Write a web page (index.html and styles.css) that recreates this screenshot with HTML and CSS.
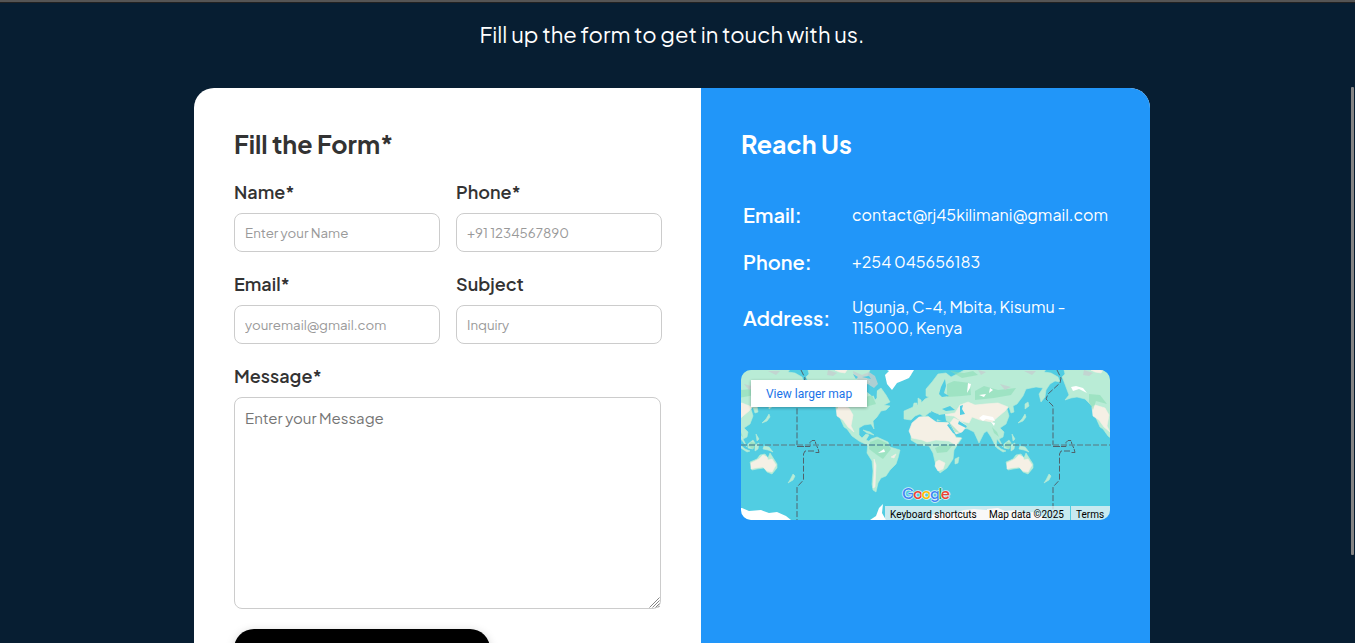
FILE: index.html
```html
<!DOCTYPE html>
<html lang="en">
<head>
<meta charset="utf-8">
<title>Contact</title>
<link rel="stylesheet" href="styles.css">
</head>
<body>
<div class="page">
  <p class="intro">Fill up the form to get in touch with us.</p>
  <main class="card">
    <form class="form">
      <h2 class="heading">Fill the Form*</h2>
      <div class="grid">
        <div class="field"><label for="name">Name*</label><input id="name" placeholder="Enter your Name"></div>
        <div class="field"><label for="phone">Phone*</label><input id="phone" placeholder="+91 1234567890"></div>
        <div class="field"><label for="email">Email*</label><input id="email" placeholder="youremail@gmail.com"></div>
        <div class="field"><label for="subject">Subject</label><input id="subject" placeholder="Inquiry"></div>
      </div>
      <div class="field message"><label for="message">Message*</label><textarea id="message" placeholder="Enter your Message"></textarea>
        <svg class="grip" width="11" height="11" viewBox="0 0 11 11" fill="none" stroke="#777" stroke-width=".9"><path d="M.5 10.5l10-10M3.5 10.5l7-7M6.5 10.5l4-4M9 10.5l1.5-1.5"/></svg></div>
      <button class="submit" type="button" aria-label="Submit"></button>
    </form>
    <section class="reach">
      <h2 class="heading">Reach Us</h2>
      <dl class="details">
        <dt>Email:</dt><dd>contact@rj45kilimani@gmail.com</dd>
        <dt>Phone:</dt><dd>+254 045656183</dd>
        <dt>Address:</dt><dd class="address">Ugunja, C-4, Mbita, Kisumu -<br>115000, Kenya</dd>
      </dl>
      <div class="map">
        <svg class="world" viewBox="0 0 369 150" width="369" height="150">
          <defs>
            <g id="world">
              <g fill="#b9ecd6" stroke="#b9ecd6" stroke-width=".6" stroke-linejoin="round">
                <path d="M10 9l-1-2 3-3-1-4h62l-4 8 4 4-4 4 1 6 6 3 2 5 2-2v-7l4-3 5 7 4 7-6 3 6 1-4 4-5 1-4 6-4 4 1 8-3-5-7 1-5 3v7l3 3 4-4 3 1-3 5 5 2 1 6-5-3-8-4-7-5-5-7-3-2-4-9-2-9-4-5-5-5-8-2-6 1-6 2 4-5z"/>
                <path d="M71 72l3-3 6-2 11 5 2 5 10 3-2 8-2 6-6 6-4 6-5 2-3 5-2 9-3-2-1-6 1-13-1-10-5-8z"/>
                <path d="M123 34l5-5 4-2-3-1v-7l6-7 6-8 8-1 5 4 8-4 9-5h79l-3 4 7 1 7 4 2 5-5-1-5 3-4 6-1 7-4 5-2-8 4-6-7-1-10 2-3 7-6 8-4 2 1 6-3 1-2-6-2 2 2 7-3 8-6 4 4 4-1 5-4 2 4 8-6-8-1 8-5-10-4-6-3 2-5 10-5-11-6-3-12-2-12-8-7 2 2-7-9-2-6 5-4-3-5 2-4 4-7-1v-8z"/>
                <path d="M121 28l3 2 1 7-5 1 1-4zm-4 5h3v4h-4zm6 14l8-1 4 4 5 3 11-1 8 15 6 1-8 12-1 9-6 9-7 5-4-7-3-13-4-7-10-1-8-5v-12z"/>
                <path d="M197 73l7 6 5 2-3 1-6-4zm10 1l5-4 2 3-2 6-5-1zm7 1l4-2-1 6-3 2zm9 1l5 1 4 5-5-2-5-1zM215 64l3 5-2 2zM225 49l3-5 1 3-3 4-5 2zm3-15l3-2 1 4-4 3z"/>
                <path d="M209 92l7-3 3-4 5-1 3 4 2-5 7 11v4l-5 6-5-2-3-4-7 1-5 1z"/>
                <path d="M254 106l-2 4-5 3 2-3 3-6zM162 87l-1 6-3 1v-5zM107 3l6-1 1 3-5 2zM66 60l7 2 4 3-7-2z"/>
              </g>
              <g fill="#f5f0e5" stroke="#f5f0e5" stroke-width=".6" stroke-linejoin="round">
                <path d="M39 37l3-2 10 3 4 7-2 11 3 6-6-5-5-7-6-4zM115 53l7-6h10l7 5 12 1 4 8 4 7h5l-5 7-7-4-13-1-9 2-5-2-10-2-3-7zM153 53l4-5 6 3 7 5-5 6-6 2zM146 45l12-2 5-8 8-3 7 3 10-1 13-1 10 4-3 4-6 5-7 6-12-2-8-3-3 6-8-2-7-5zM139 92l3-2 6 3-2 6-5 2-3-5zM210 93l8-4 4-4 4 2 1 3 4-1 4 6-4 7-5-1-4-4-8 1-4 1zM77 89l2 6-1 22-2 1 1-13z"/>
                <path d="M38 0h12l-2 3-6-1zM94 87l5-3-2 4z"/>
              </g>
              <g fill="#89ddb4" opacity=".55">
                <path d="M150 14l7-3 16 2 1 12-9 1-15 1zM178 21l9-5 14 4 18-2-5 7-17 3-19 2zM73 72l8-3 9 4 4 6-8 10-6-4-8-6zM36 24l11 1 7 9-11-3-3 9-4-8zM153 1l14 2 9-2 5 4-16 3zM153 53l5 9 5 1M138 78l9-4 8 2-5 6-10 1zM210 72l5 1-3 6-5-3zM195 57l5 5 2 5-5-4zM63 29l12-4 4 9-11 3z"/>
              </g>
              <g fill="#fff">
                <path d="M90 0h27l-5 8-7 3-5 2-5 7-5-6-2-9 4-4zM182 48l4-3 10 2 2 4-9-2-3 2zM81 83l6-4 1 3zM18 17l5-1 7 2 4 5-8-4-6 2zM171 13l3 1-1 4-3 5zM193 18l3 2-4 3zM182 25l7-1-2 3zM194 52l4 1-1 3z"/>
                <path d="M190 139l11-1 7 3 12-1 8 3 8-1 9 4 5 4-2 3h-58zM73 150l6-4 3-8 4-4-1 9 4 7zM134 145l15-3 9 1 9-3 10-1 12 1 9 1v9h-64z"/>
              </g>
              <g fill="#c4cfd0">
                <path d="M56 1l9 4 7-3 6 4 3 8-4 4-8-5-5-1-7-5zM31 0l9 3-4 3-6-1zM181 0l8 2-5 3zM227 1h12l-4 4zM203 14l11 3-6 3z" opacity=".8"/>
              </g>
              <path d="M69 13l5 4 6 3-1 5-4 1-6-5zM56 4l5 3-2 2zM65 7l7-1 2 3zM144 17l4-8 1 7-2 7 5 3-7 1-3-3zM134 41l8 4 6-1 1 7-7-1-7-3zM145 39l8-3 5 4-9 1zM163 36l3-1-1 4 3 5-5 1zM152 54l6 10-2-1-6-8zM162 51l8 5-1 2-8-4z" fill="#51cde2"/>
              <path d="M4 0l4 8-1 5-12 11-2 5 7 7v39" fill="none" stroke="#50636c" stroke-dasharray="6 2"/>
              <path d="M0 76.500h13v-4l2-2h3l1 4 2 4 1 4h-4" fill="none" stroke="#50636c" stroke-dasharray="7 1"/>
              <path d="M17 81H8l-1.500 3v26L0 117v33" fill="none" stroke="#50636c" stroke-dasharray="6 2"/>
            </g>
          </defs>
          <rect width="369" height="150" fill="#51cde2"/>
          <use href="#world" x="-200"/><use href="#world" x="56"/><use href="#world" x="312"/>
          <path d="M0 75h369" stroke="#58939f" stroke-width="1.4" stroke-dasharray="6 2"/>
        </svg>
        <a class="larger">View larger map</a>
        <div class="google"><span class="b">G</span><span class="r">o</span><span class="y">o</span><span class="b">g</span><span class="g">l</span><span class="r">e</span></div>
        <div class="legal"><span class="keys">Keyboard shortcuts</span><span class="data">Map data ©2025</span><span class="terms">Terms</span></div>
      </div>
    </section>
  </main>
  <i class="thumb"></i>
</div>
</body>
</html>
```
FILE: styles.css
```css
* { box-sizing: border-box; }
body { margin: 0; font-family: "Plus Jakarta Sans", Inter, sans-serif; }
.page { position: relative; height: 643px; overflow: hidden; background: #071e32; border-top: 2px solid #555; box-shadow: inset 0 1px #222; }
.intro { margin: 0; padding: 15px 0 0 479.5px; height: 86px; font-size: 22px; line-height: 34px; font-weight: 400; color: #fff; white-space: nowrap; }
.card { display: flex; width: 956px; height: 700px; margin-left: 194px; border-radius: 20px; overflow: hidden; background: #fff; }
.form { width: 507px; padding: 40px; }
.reach { width: 449px; padding: 40px; background: #2196f9; color: #fff; }
.heading { margin: 0; font-size: 25px; line-height: 32px; font-weight: 700; white-space: nowrap; }
.form .heading { color: #333; }
.grid { display: grid; grid-template-columns: 206px 206px; gap: 20px 16px; margin-top: 20px; }
.field { position: relative; display: flex; flex-direction: column; height: 72px; }
.field label { font-size: 18px; line-height: 24px; font-weight: 600; color: #333; margin-bottom: 9px; }
input, textarea { font-family: inherit; border: 1px solid #ccc; border-radius: 8px; background: #fff; padding: 0 10px; }
input { height: 39px; flex: none; width: 206px; font-size: 13.3px; }
input::placeholder { color: #999; }
textarea::placeholder { color: #757575; }
.message { width: 427px; margin-top: 20px; height: auto; }
textarea { width: 427px; height: 212px; padding-top: 10px; font-size: 15px; line-height: 20px; resize: none; }
.grip { position: absolute; right: 1px; bottom: 1px; }
.submit { display: block; width: 256px; height: 50px; margin-top: 20px; border: 0; border-radius: 20px; background: #000; box-shadow: 0 2px 10px rgba(0,0,0,.18); }
.details { display: grid; grid-template-columns: 109px 260px; grid-template-rows: 47px 47px 65px; align-items: center; margin: 31px 0 0 2px; white-space: nowrap; }
dt { font-size: 20px; font-weight: 600; }
dd { margin: 0; font-size: 16px; line-height: 21px; font-weight: 400; }
.address { padding-bottom: 2px; }
.map { position: relative; width: 369px; height: 150px; margin-top: 20px; border-radius: 10px; overflow: hidden; font-family: Roboto, sans-serif; }
.world { display: block; }
.larger { position: absolute; left: 10px; top: 10px; width: 116px; height: 27px; background: #fff; box-shadow: 0 1px 3px rgba(0,0,0,.3); color: #1a73e8; font-size: 12px; line-height: 28px; text-align: center; }
.google { position: absolute; left: 161px; top: 113px; font: 600 15px/20px "Plus Jakarta Sans", sans-serif; letter-spacing: -1.3px; text-shadow: 1px 0 #fff9, -1px 0 #fff9, 0 1px #fff9, 0 -1px #fff9; }
.b { color: #4285f4; } .r { color: #ea4335; } .y { color: #fbbc04; } .g { color: #34a853; }
.legal { position: absolute; right: 0; bottom: 0; display: flex; width: 225px; height: 14px; font-size: 10px; line-height: 17px; color: #000; white-space: nowrap; }
.legal span { background: rgba(245,245,245,.72); padding-left: 5px; }
.keys { width: 99px; }
.data { width: 86px; }
.terms { width: 39px; margin-left: 1px; }
.thumb { position: absolute; left: 1351px; top: 85px; width: 3px; height: 468px; border-radius: 1px; background: #858585; }
```
